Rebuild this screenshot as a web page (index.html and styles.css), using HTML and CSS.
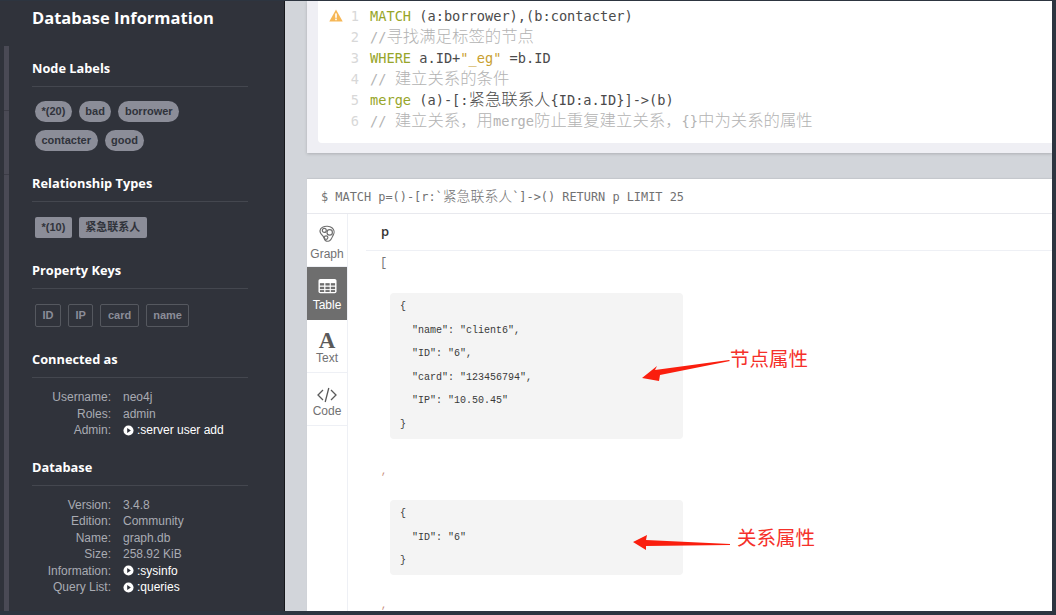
FILE: index.html
```html
<!DOCTYPE html>
<html lang="zh">
<head>
<meta charset="utf-8">
<title>Neo4j Browser</title>
<link rel="stylesheet" href="styles.css">
</head>
<body>
<div class="app">
  <div class="rail">
    <div class="rail-seg rail-a"></div>
    <div class="rail-seg rail-b"></div>
    <div class="rail-seg rail-c"></div>
  </div>
  <aside class="drawer">
    <h1>Database Information</h1>
    <section class="sec sec-first">
      <h2>Node Labels</h2>
      <div class="chips">
        <span class="chip pill">*(20)</span><span class="chip pill">bad</span><span class="chip pill">borrower</span>
        <span class="chip pill">contacter</span><span class="chip pill">good</span>
      </div>
    </section>
    <section class="sec">
      <h2>Relationship Types</h2>
      <div class="chips">
        <span class="chip rect">*(10)</span><span class="chip rect">紧急联系人</span>
      </div>
    </section>
    <section class="sec">
      <h2>Property Keys</h2>
      <div class="chips">
        <span class="chip outline">ID</span><span class="chip outline">IP</span><span class="chip outline">card</span><span class="chip outline">name</span>
      </div>
    </section>
    <section class="sec sec-conn">
      <h2>Connected as</h2>
      <dl class="info">
        <dt>Username:</dt><dd>neo4j</dd>
        <dt>Roles:</dt><dd>admin</dd>
        <dt>Admin:</dt><dd class="cmd"><svg class="play" viewBox="0 0 12 12"><circle cx="6" cy="6" r="5.5" fill="#fff"/><path d="M4.6 3.4 8.6 6 4.6 8.6Z" fill="#30333b"/></svg>:server user add</dd>
      </dl>
    </section>
    <section class="sec sec-db">
      <h2>Database</h2>
      <dl class="info">
        <dt>Version:</dt><dd>3.4.8</dd>
        <dt>Edition:</dt><dd>Community</dd>
        <dt>Name:</dt><dd>graph.db</dd>
        <dt>Size:</dt><dd>258.92 KiB</dd>
        <dt>Information:</dt><dd class="cmd"><svg class="play" viewBox="0 0 12 12"><circle cx="6" cy="6" r="5.5" fill="#fff"/><path d="M4.6 3.4 8.6 6 4.6 8.6Z" fill="#30333b"/></svg>:sysinfo</dd>
        <dt>Query List:</dt><dd class="cmd"><svg class="play" viewBox="0 0 12 12"><circle cx="6" cy="6" r="5.5" fill="#fff"/><path d="M4.6 3.4 8.6 6 4.6 8.6Z" fill="#30333b"/></svg>:queries</dd>
      </dl>
    </section>
  </aside>
  <main class="stream">
    <div class="editor-frame">
      <div class="editor">
        <div class="warn"><svg viewBox="0 0 14 13" width="14" height="13"><path d="M7 .5 13.7 12.5H.3Z" fill="#f6b756"/><rect x="6.2" y="4.4" width="1.6" height="4.4" fill="#fff"/><rect x="6.2" y="9.6" width="1.6" height="1.6" fill="#fff"/></svg></div>
        <ol class="code">
          <li><span class="kw">MATCH</span> (a:borrower),(b:contacter)</li>
          <li><span class="cm">//<span class="zh">寻找满足标签的节点</span></span></li>
          <li><span class="kw">WHERE</span> a.ID+<span class="str">"_eg"</span> =b.ID</li>
          <li><span class="cm">// <span class="zh">建立关系的条件</span></span></li>
          <li><span class="kw">merge</span> (a)-[:<span class="zh">紧急联系人</span>{ID:a.ID}]-&gt;(b)</li>
          <li><span class="cm">// <span class="zh">建立关系，用</span>merge<span class="zh">防止重复建立关系，</span>{}<span class="zh">中为关系的属性</span></span></li>
        </ol>
      </div>
    </div>
    <div class="result">
      <div class="result-head">$ MATCH p=()-[r:`<span class="zh-head">紧急联系人</span>`]-&gt;() RETURN p LIMIT 25</div>
      <div class="result-body">
        <nav class="tabs">
          <div class="tab tab-graph">
            <svg class="tab-icon" viewBox="0 0 20 20" width="18" height="18" fill="none" stroke="#6f6f6f" stroke-width="1.3"><path d="M5 2.5C8 .8 13 1 15.5 3c2.600 2 3 5.500 1.500 8-1 1.800-1.500 3.500-2.800 5.200-1.500 2-4.200 2.500-6 1-1.500-1.200-1.200-3.200-2.500-4.700C4 10.800 2 9 2.200 6.500 2.300 4.800 3.500 3.300 5 2.500Z"/><circle cx="7" cy="6" r="2.200"/><circle cx="13" cy="8.200" r="3"/><circle cx="9" cy="14" r="2"/></svg>
            <span>Graph</span>
          </div>
          <div class="tab tab-on">
            <svg class="tab-icon" viewBox="0 0 20 16" width="19" height="15"><rect x="0.500" y="0.500" width="19" height="15" rx="2" fill="#fff"/><g fill="#6e6e6e"><rect x="2" y="5" width="4.500" height="2.500"/><rect x="7.800" y="5" width="4.500" height="2.500"/><rect x="13.500" y="5" width="4.500" height="2.500"/><rect x="2" y="8.800" width="4.500" height="2.500"/><rect x="7.800" y="8.800" width="4.500" height="2.500"/><rect x="13.500" y="8.800" width="4.500" height="2.500"/><rect x="2" y="12.300" width="4.500" height="2"/><rect x="7.800" y="12.300" width="4.500" height="2"/><rect x="13.500" y="12.300" width="4.500" height="2"/></g></svg>
            <span>Table</span>
          </div>
          <div class="tab">
            <b class="tab-a">A</b>
            <span>Text</span>
          </div>
          <div class="tab tab-code">
            <svg class="tab-icon" viewBox="0 0 20 16" width="20" height="16" fill="none" stroke="#5a5a5a" stroke-width="1.300"><path d="M6 3 1 8l5 5M14 3l5 5-5 5M11.800 1 8.200 15"/></svg>
            <span>Code</span>
          </div>
        </nav>
        <div class="table">
          <div class="th">p</div>
          <div class="cell">
            <div class="bracket">[</div>
            <pre class="json json-a">{
  "name": "client6",
  "ID": "6",
  "card": "123456794",
  "IP": "10.50.45"
}</pre>
            <div class="comma comma-a">,</div>
            <pre class="json json-b">{
  "ID": "6"
}</pre>
            <div class="comma comma-b">,</div>
          </div>
        </div>
      </div>
    </div>
  </main>
  <svg class="arrow arrow-a" viewBox="0 0 90 26" width="90" height="26"><path d="M0 20 15 8 13 12 87 2 88 3 18 17 17 23Z" fill="#fa1e0e"/></svg>
  <div class="note note-a">节点属性</div>
  <svg class="arrow arrow-b" viewBox="0 0 98 18" width="98" height="18"><path d="M0 8 14 1 13 6 97 10 97 11 13 12 13 16Z" fill="#fa1e0e"/></svg>
  <div class="note note-b">关系属性</div>
</div>
</body>
</html>
```
FILE: styles.css
```css
* { box-sizing: border-box; }
html, body { margin: 0; padding: 0; height: 100%; overflow: hidden; background: #2d3540; }
.app {
  position: relative;
  display: flex;
  width: 1056px;
  height: 615px;
  padding: 1px 4px 4px 0;
  font-family: "Liberation Sans", "Noto Sans CJK SC", sans-serif;
}
.rail {
  flex: 0 0 9px;
  display: flex;
  flex-direction: column;
  padding: 45px 0 0 4px;
  background: #30333b;
}
.rail-seg { background: #4a4a55; border-bottom: 1px solid #3c3c46; }
.rail-a { height: 65px; }
.rail-b { height: 64px; }
.rail-c { flex: 1; border-bottom: 0; }
.drawer {
  flex: 0 0 276px;
  padding: 0 36px 0 23px;
  background: #30333b;
  border-right: 1px solid #17181c;
  color: #fff;
}
h1 {
  margin: 0;
  font: 700 16.5px/34px "Open Sans", "Noto Sans", sans-serif;
  color: #fff;
}
h2 {
  margin: 0 0 15px;
  height: 37px;
  padding-top: 9px;
  font: 700 12.8px/18px "Open Sans", "Noto Sans", sans-serif;
  color: #fff;
  border-bottom: 1px solid #44474f;
}
.sec-first { margin-top: 15px; }
.sec-first .chips { margin-top: -1px; }
.sec + .sec { margin-top: 14px; }
.sec.sec-db { margin-top: 10px; }
.chips { display: flex; flex-wrap: wrap; gap: 8px 7px; padding-left: 3px; }
.chip {
  display: block;
  height: 21px;
  padding: 0 6.5px;
  font: 700 11px/20px "Liberation Sans", "Noto Sans CJK SC", sans-serif;
}
.pill { background: #8b8d98; color: #30333b; border-radius: 11px; }
.rect { background: #8b8d98; color: #30333b; border-radius: 2px; }
.chip.outline { height: 23px; color: #8b8d98; border: 1px solid #55585f; border-radius: 2px; line-height: 21px; }
.info {
  display: grid;
  grid-template-columns: 79px 1fr;
  column-gap: 12px;
  margin: -4px 0 0;
  font-size: 12px;
  line-height: 16.5px;
  color: #a9abb3;
}
.info dt { text-align: right; }
.info dd { margin: 0; }
.info .cmd { color: #fff; display: flex; align-items: center; gap: 3px; }
.play { width: 11px; height: 11px; flex: 0 0 11px; }

.stream {
  flex: 1;
  min-width: 0;
  display: flex;
  flex-direction: column;
  padding-left: 22px;
  background: #d2d5da;
  overflow: hidden;
}
.editor-frame {
  flex: 0 0 152px;
  padding: 0 0 10px 11px;
  background: #efeff4;
  box-shadow: 0 1px 3px rgba(0, 0, 0, .18);
}
.editor {
  display: flex;
  height: 142px;
  padding: 5px 0 0 11px;
  background: #fff;
  border-radius: 0 0 0 4px;
}
.warn { flex: 0 0 14px; padding-top: 2px; }
.code {
  margin: 0;
  padding: 0;
  list-style: none;
  counter-reset: ln;
  font: 13.65px/21px "DejaVu Sans Mono", "Noto Sans CJK SC", monospace;
  color: #4b4b4b;
  white-space: nowrap;
}
.code li { counter-increment: ln; height: 21px; }
.code li::before {
  content: counter(ln);
  display: inline-block;
  width: 16px;
  margin-right: 11px;
  text-align: right;
  color: #d8d8d8;
}
.zh { font-size: 16.4px; line-height: 0; font-family: "Noto Sans CJK SC", sans-serif; font-weight: 300; }
.zh-head { font-size: 13.9px; line-height: 0; font-family: "Noto Sans CJK SC", sans-serif; font-weight: 300; }
.kw { color: #97a52a; }
.str { color: #c9a030; }
.cm { color: #b3b3b3; }
.result {
  flex: 1;
  margin-top: 26px;
  background: #fff;
  box-shadow: 0 -1px 1px rgba(0, 0, 0, .06);
  min-height: 0;
  display: flex;
  flex-direction: column;
}
.result-head {
  flex: 0 0 35px;
  padding: 9px 0 0 14px;
  font: 11.9px/18px "DejaVu Sans Mono", "Noto Sans CJK SC", monospace;
  color: #717172;
  border-bottom: 1px solid #e8e9ee;
}
.result-body { flex: 1; display: flex; min-height: 0; }
.tabs { flex: 0 0 41px; border-right: 1px solid #eef0f5; }
.tab {
  display: flex;
  flex-direction: column;
  align-items: center;
  height: 53px;
  padding-top: 9px;
  font-size: 12px;
  line-height: 13px;
  color: #717172;
  border-bottom: 1px solid #eef0f5;
}
.tab span { margin-top: 3px; }
.tab-graph { padding-top: 10px; }
.tab-graph span { margin-top: 4px; }
.tab-code .tab-icon { margin-top: 3px; margin-bottom: -3px; }
.tab-icon { display: block; height: 20px; }
.tab-on { background: #6e6e6e; color: #fff; border-bottom: 0; }
.tab-a {
  display: block;
  height: 20px;
  padding-top: 1px;
  font: 700 23px/21px "Liberation Serif", serif;
  color: #5a5a5a;
}
.table { flex: 1; min-width: 0; padding-left: 18px; }
.th {
  height: 37px;
  padding: 8px 0 0 15px;
  font: 600 13px/18px "Open Sans", sans-serif;
  color: #333;
  border-bottom: 1px solid #eef0f5;
}
.cell { padding-left: 15px; font-family: "Liberation Mono", monospace; color: #444; }
.bracket { height: 24px; margin-left: -1px; font-size: 12px; line-height: 25px; color: #777; }
.json {
  width: 293px;
  margin: 18px 0 0 9px;
  padding: 0 10px;
  background: #f4f4f4;
  border-radius: 4px;
  font: 10px/23.5px "Liberation Mono", "Noto Sans CJK SC", monospace;
  color: #3a3a3a;
}
.json-a { height: 146px; padding-top: 2px; }
.json-b { height: 75px; margin-top: 0; padding-top: 2px; }
.comma { font-size: 10px; color: #c58a7a; line-height: 12px; }
.comma-a { height: 61px; padding-top: 27px; }
.comma-b { height: 35px; padding-top: 26px; line-height: 9px; }

.arrow { position: absolute; }
.arrow-a { left: 642px; top: 358px; }
.arrow-b { left: 633px; top: 534px; }
.note {
  position: absolute;
  font: 19.5px/24px "Noto Sans CJK SC", sans-serif;
  color: #f5302a;
}
.note-a { left: 730px; top: 346px; }
.note-b { left: 737px; top: 525px; }
```
